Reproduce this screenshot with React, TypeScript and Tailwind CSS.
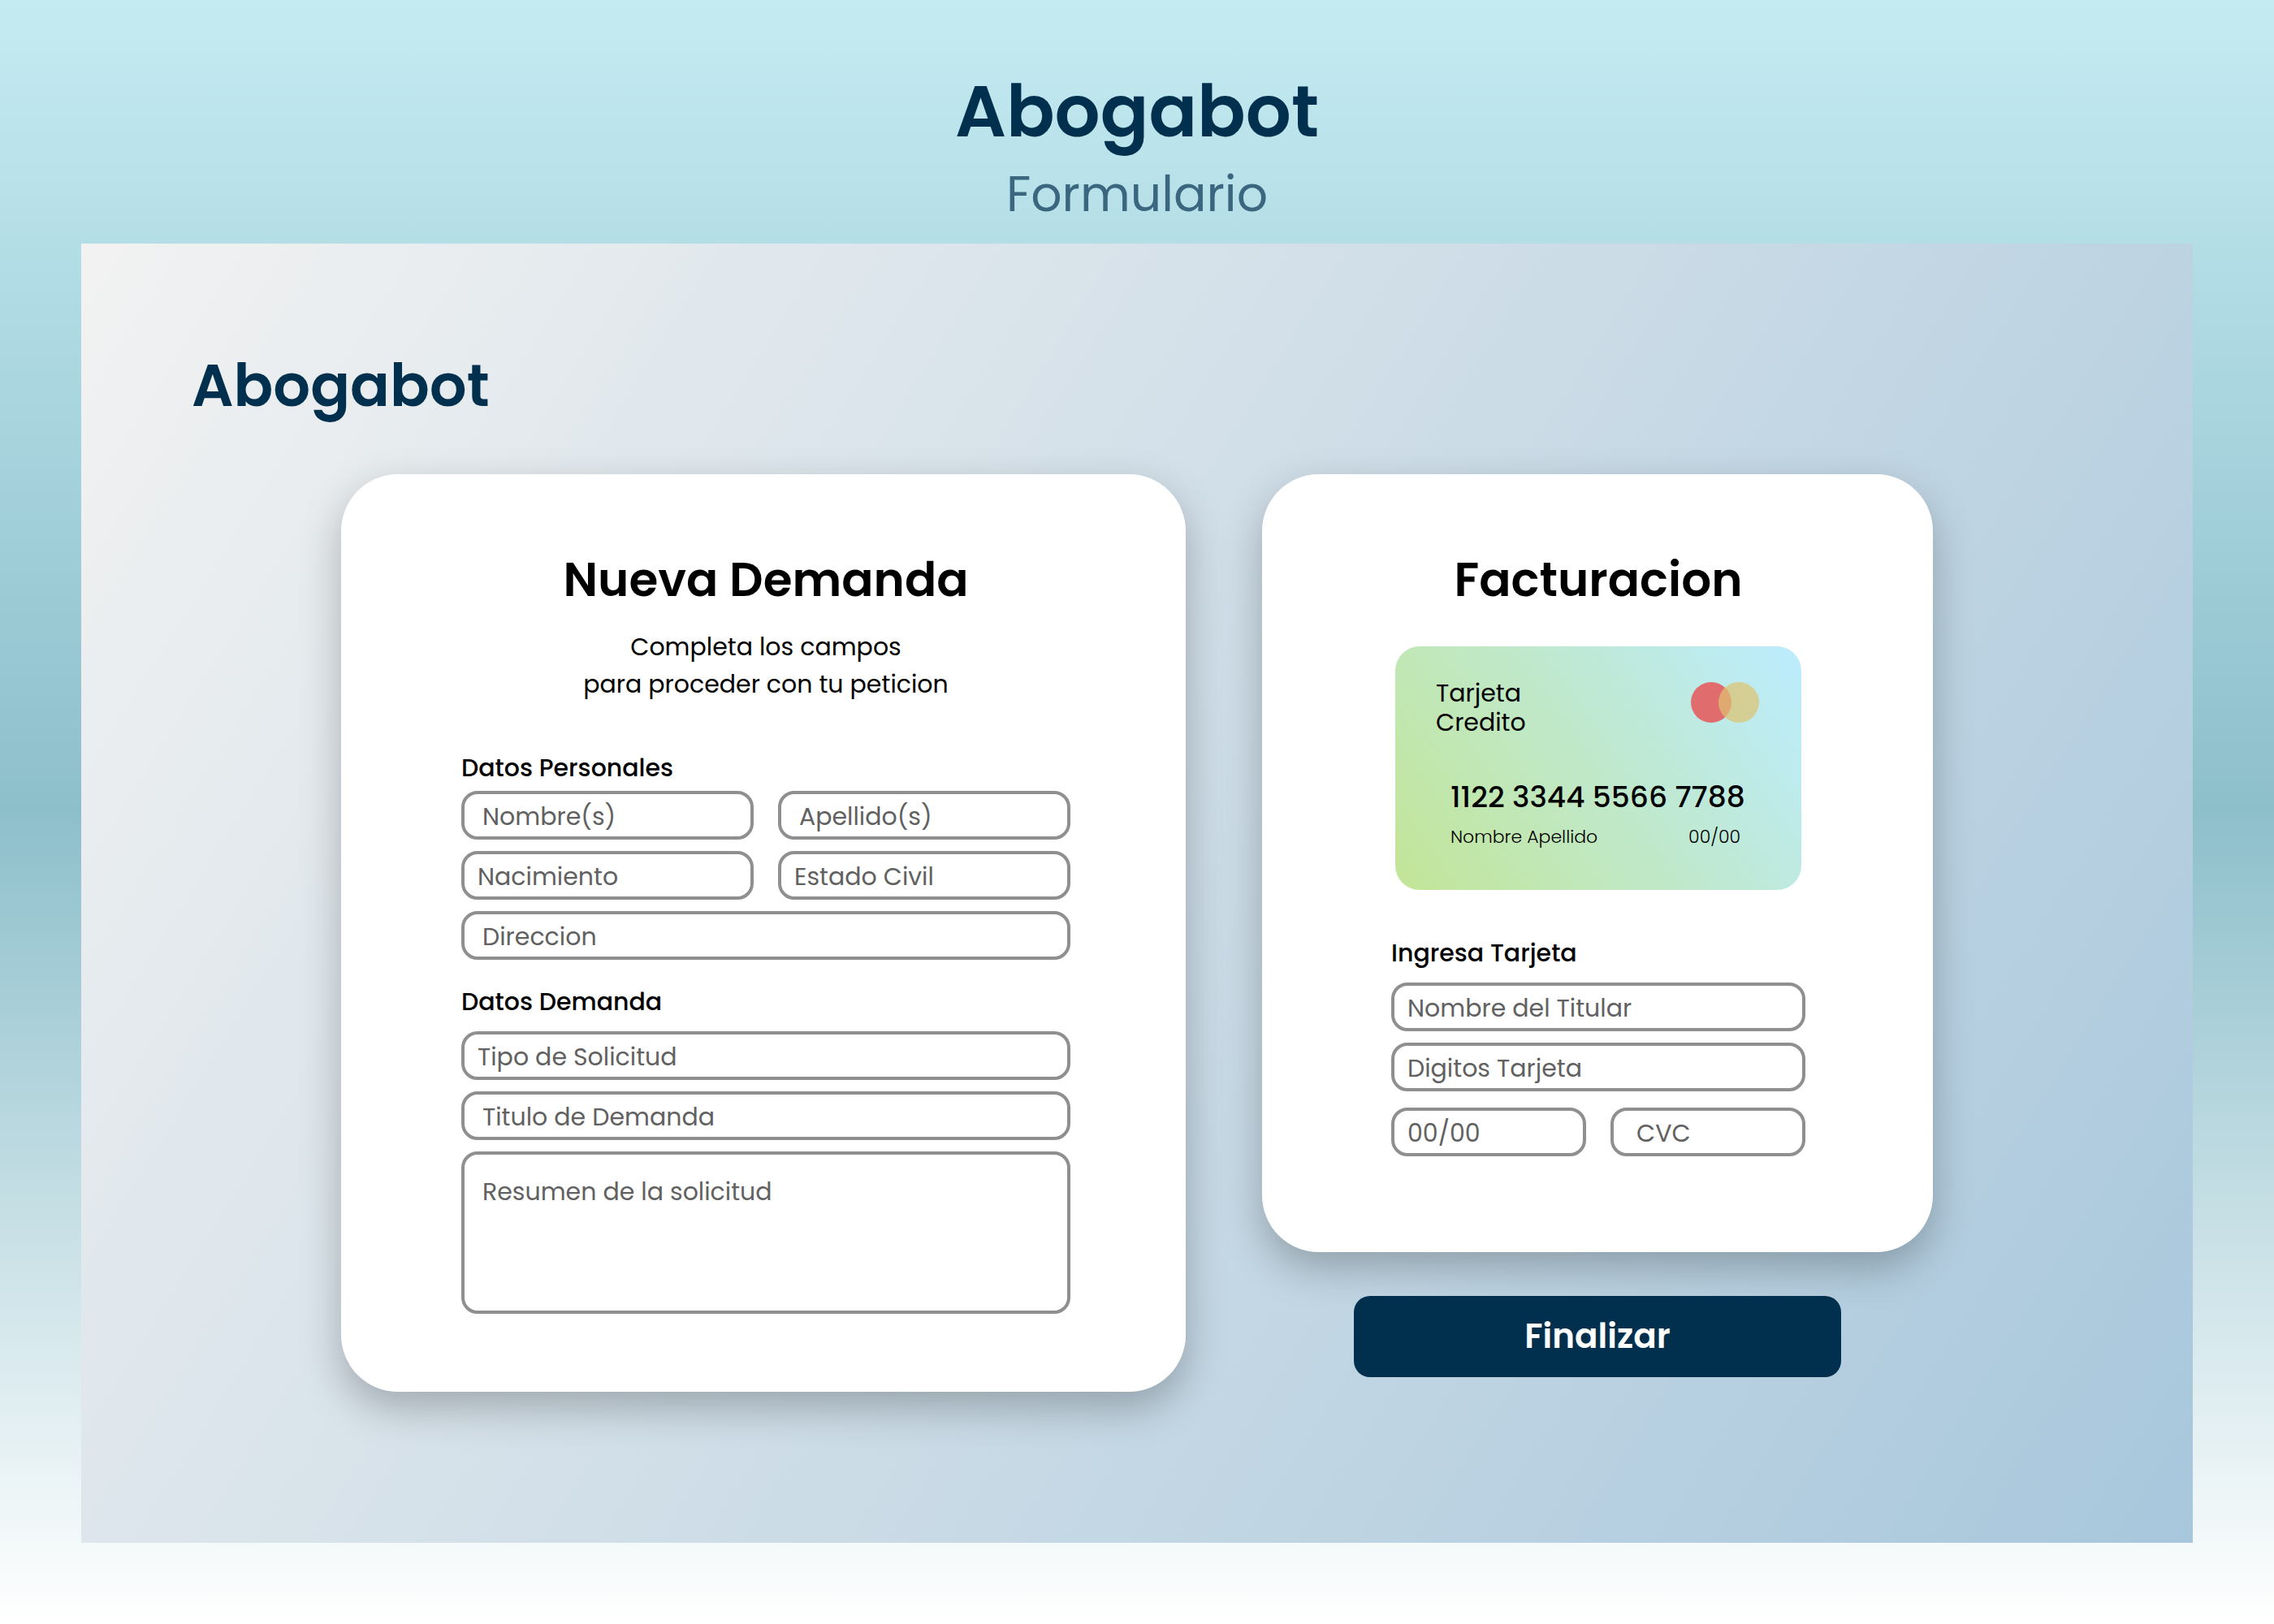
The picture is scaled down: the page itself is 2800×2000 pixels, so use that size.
import React from "react";

type FieldProps = {
  id: string;
  label: string;
  inset?: "sm" | "md" | "lg";
  inputMode?: "text" | "numeric";
};

const insets = {
  sm: "pl-4",
  md: "pl-[22px]",
  lg: "pl-[28px]",
};

const fieldBase =
  "block w-full min-w-0 rounded-[20px] border-4 border-[#8f8f8f] bg-white pr-4 text-[30px] leading-[44px] text-[#616161] outline-none placeholder:text-[#616161] placeholder:opacity-100 focus:border-[#00304d]";

const cardBase =
  "w-full rounded-[70px] bg-white shadow-[0_20px_50px_rgba(0,0,0,0.25)]";

const cardTitle = "text-center text-[58px] leading-[80px] font-semibold";

const legend = "text-[30px] leading-[44px] font-medium";

function Field({ id, label, inset = "sm", inputMode = "text" }: FieldProps) {
  return (
    <input
      id={id}
      name={id}
      type="text"
      inputMode={inputMode}
      aria-label={label}
      placeholder={label}
      className={`${fieldBase} h-15 pt-1 ${insets[inset]}`}
    />
  );
}

function DemandCard() {
  return (
    <section
      aria-labelledby="demanda"
      className={`${cardBase} pt-[90px] pr-[142px] pb-24 pl-37`}
    >
      <h2 id="demanda" className={cardTitle}>
        Nueva Demanda
      </h2>
      <p className="mt-5 text-center text-[30px] leading-[46px]">
        Completa los campos
        <br />
        para proceder con tu peticion
      </p>

      <h3 className={`${legend} mt-[58px]`}>Datos Personales</h3>
      <div className="mt-1.5 flex flex-col gap-3.5">
        <div className="grid grid-cols-2 gap-x-7.5 gap-y-3.5">
          <Field id="nombre" label="Nombre(s)" inset="md" />
          <Field id="apellido" label="Apellido(s)" inset="md" />
          <Field id="nacimiento" label="Nacimiento" />
          <Field id="estado-civil" label="Estado Civil" />
        </div>
        <Field id="direccion" label="Direccion" inset="md" />
      </div>

      <h3 className={`${legend} mt-7.5`}>Datos Demanda</h3>
      <div className="mt-3.5 flex flex-col gap-3.5">
        <Field id="tipo" label="Tipo de Solicitud" />
        <Field id="titulo" label="Titulo de Demanda" inset="md" />
        <textarea
          id="resumen"
          name="resumen"
          aria-label="Resumen de la solicitud"
          placeholder="Resumen de la solicitud"
          className={`${fieldBase} h-50 resize-none pt-6 pl-[22px]`}
        />
      </div>
    </section>
  );
}

function CardBrand() {
  return (
    <svg
      viewBox="0 0 84 50"
      className="mt-1 h-[50px] w-[84px] shrink-0"
      aria-hidden="true"
    >
      <circle cx="25" cy="25" r="25" fill="#e06c6e" />
      <circle cx="59" cy="25" r="25" fill="#dfc270" fillOpacity="0.71" />
    </svg>
  );
}

function CreditCard() {
  return (
    <div className="mx-auto mt-[42px] flex min-h-75 w-full max-w-[500px] flex-col rounded-[30px] bg-[linear-gradient(55deg,#c3e597,#bcecff)] pt-10">
      <div className="flex items-start justify-between pr-[52px] pl-[50px]">
        <p className="text-[30px] leading-[36px]">
          Tarjeta
          <br />
          Credito
        </p>
        <CardBrand />
      </div>
      <div className="mt-[49px] pr-[75px] pl-[68px]">
        <p className="text-[36px] leading-[50px] font-medium whitespace-nowrap">
          1122 3344 5566 7788
        </p>
        <div className="mt-2 flex justify-between text-[22px] leading-[32px] font-light">
          <span>Nombre Apellido</span>
          <span>00/00</span>
        </div>
      </div>
    </div>
  );
}

function BillingCard() {
  return (
    <section
      aria-labelledby="facturacion"
      className={`${cardBase} pt-[90px] pr-[157px] pb-[118px] pl-[159px]`}
    >
      <h2 id="facturacion" className={cardTitle}>
        Facturacion
      </h2>
      <CreditCard />
      <h3 className={`${legend} mt-14`}>Ingresa Tarjeta</h3>
      <div className="mt-3.5 flex flex-col gap-3.5">
        <Field id="titular" label="Nombre del Titular" />
        <Field id="digitos" label="Digitos Tarjeta" inputMode="numeric" />
      </div>
      <div className="mt-5 grid grid-cols-2 gap-7.5">
        <Field id="vencimiento" label="00/00" inputMode="numeric" />
        <Field id="cvc" label="CVC" inset="lg" inputMode="numeric" />
      </div>
    </section>
  );
}

export default function App() {
  return (
    <main className="flex min-h-screen flex-col bg-[linear-gradient(180deg,#c5ebf2_0%,#8dbfcb_50%,#ffffff_100%)] px-25 pb-25 font-['Poppins','Inter',sans-serif] text-black">
      <header className="pt-21 pb-5 text-center">
        <h1 className="text-[88px] leading-[108px] font-semibold text-[#00304d]">
          Abogabot
        </h1>
        <p className="mt-1.5 text-[60px] leading-[82px] text-[#3a677f]">
          Formulario
        </p>
      </header>

      <div className="flex-1 bg-[linear-gradient(122deg,#f2f2f2,#a8c7dc)] pt-[125px]">
        <p className="pl-34 text-[72px] leading-[100px] font-semibold text-[#00304d]">
          Abogabot
        </p>
        <form
          className="mt-[59px] grid grid-cols-[1040fr_826fr] items-start gap-[94px] px-80 pb-[186px]"
          onSubmit={(event) => event.preventDefault()}
        >
          <DemandCard />
          <div className="flex flex-col items-center">
            <BillingCard />
            <button
              type="submit"
              className="mt-[54px] h-25 w-full max-w-[600px] rounded-[20px] bg-[#00304d] text-[42px] leading-[60px] font-semibold text-white"
            >
              Finalizar
            </button>
          </div>
        </form>
      </div>
    </main>
  );
}
